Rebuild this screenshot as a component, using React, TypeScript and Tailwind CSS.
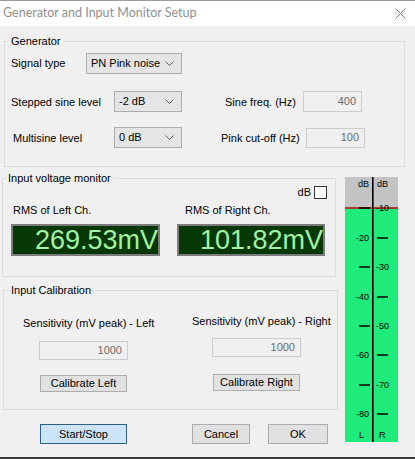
import React from 'react';

function Chevron() {
  return (
    <svg width="9" height="5" viewBox="0 0 9 5" className="shrink-0">
      <path d="M0.5 0.5 L4.5 4.5 L8.5 0.5" fill="none" stroke="#606060" strokeWidth="1" />
    </svg>
  );
}

function Combo({ value, width }: { value: string; width: string }) {
  return (
    <div className={`${width} flex h-[21px] items-center justify-between border border-[#adadad] bg-[#e5e5e5] pl-[4px] pr-[7px]`}>
      <span>{value}</span>
      <Chevron />
    </div>
  );
}

function Field({ value, className }: { value: string; className: string }) {
  return (
    <div className={`${className} flex items-center justify-end border border-[#cccccc] bg-[#f0f0f0] pr-[5px] text-[#6d6d6d]`}>
      {value}
    </div>
  );
}

function Btn({ label, className }: { label: string; className: string }) {
  return (
    <div className={`${className} flex items-center justify-center border border-[#adadad] bg-[#e1e1e1]`}>{label}</div>
  );
}

function Display({ value, className }: { value: string; className: string }) {
  return (
    <div
      className={`${className} flex h-[32px] items-center justify-end overflow-hidden border-2 border-[#7c7c7c] bg-[#053805] font-['Liberation_Sans',Arial,sans-serif] text-[27px] leading-none text-[#a2f2a2]`}
    >
      {value}
    </div>
  );
}

function Meter() {
  const left = ['-20', '-40', '-60', '-80'];
  const right = ['-10', '-30', '-50', '-70'];
  const ys = [31, 61, 90, 120, 149, 178, 208, 237];
  return (
    <svg width="53" height="265" viewBox="0 0 53 265" className="ml-[5px] mt-[10px] shrink-0" fontFamily="'Liberation Sans', Arial, sans-serif" fontSize="9">
      <rect x="0" y="0" width="53" height="31" fill="#c3c3c3" />
      <rect x="0" y="31" width="53" height="234" fill="#1feb7b" />
      <rect x="0" y="30" width="53" height="2" fill="#a53b2a" />
      <rect x="27" y="0" width="1.6" height="265" fill="#000" />
      <text x="24" y="10" textAnchor="end">dB</text>
      <text x="32" y="10">dB</text>
      {ys.map((y, i) => {
        const onRight = i % 2 === 0;
        const label = onRight ? right[i / 2] : left[(i - 1) / 2];
        return (
          <g key={y}>
            {onRight ? (
              <>
                <text x="31" y={y} dominantBaseline="central">{label}</text>
                <rect x="14" y={y - 0.75} width="11" height="1.5" fill="#000" />
              </>
            ) : (
              <>
                <text x="24" y={y} textAnchor="end" dominantBaseline="central">{label}</text>
                <rect x="32" y={y - 0.75} width="11" height="1.5" fill="#000" />
              </>
            )}
          </g>
        );
      })}
      <text x="14" y="258" dominantBaseline="central">L</text>
      <text x="34" y="258" dominantBaseline="central">R</text>
    </svg>
  );
}

export default function App() {
  return (
    <div className="flex h-[459px] w-[415px] flex-col border-b-2 border-[#3c3c3c] bg-[#f0f0f0] font-['Liberation_Sans',Arial,sans-serif] text-[11px] text-black">
      {/* title bar */}
      <div className="flex h-[26px] shrink-0 items-center justify-between border-t border-[#9b9b9b] bg-white pl-[3px] pr-[9px]">
        <span className="font-['Lato',sans-serif] text-[12.5px] text-[#8f8f8f]">Generator and Input Monitor Setup</span>
        <svg width="11" height="11" viewBox="0 0 11 11">
          <path d="M0.5 0.5 L10.5 10.5 M10.5 0.5 L0.5 10.5" stroke="#7a7a7a" strokeWidth="1" />
        </svg>
      </div>

      {/* Generator */}
      <fieldset className="ml-[4px] mt-[8px] h-[133px] w-[401px] border border-[#dcdcdc]">
        <legend className="ml-[4px] px-[2px] leading-[14px]">Generator</legend>
        <div className="mt-[5px] flex h-[21px] items-center">
          <span className="ml-[6px] w-[75px]">Signal type</span>
          <Combo value="PN Pink noise" width="w-[96px]" />
        </div>
        <div className="mt-[17px] flex h-[21px] items-center">
          <span className="ml-[6px] mt-[2px] w-[103px]">Stepped sine level</span>
          <Combo value="-2 dB" width="w-[68px]" />
          <span className="ml-[43px] mt-[2px] w-[78px]">Sine freq. (Hz)</span>
          <Field value="400" className="h-[21px] w-[59px]" />
        </div>
        <div className="mt-[15px] flex h-[21px] items-center">
          <span className="ml-[8px] mt-[2px] w-[101px]">Multisine level</span>
          <Combo value="0 dB" width="w-[68px]" />
          <span className="ml-[39px] mt-[2px] w-[85px]">Pink cut-off (Hz)</span>
          <Field value="100" className="h-[20px] w-[59px]" />
        </div>
      </fieldset>

      <div className="flex">
        <div className="flex w-[340px] flex-col">
          {/* Input voltage monitor */}
          <fieldset className="ml-[2px] mt-[4px] h-[106px] w-[334px] border border-[#dcdcdc]">
            <legend className="ml-[3px] px-[2px] leading-[14px]">Input voltage monitor</legend>
            <div className="mt-[1px] flex h-[13px] items-center justify-end pr-[8px]">
              <span className="mr-[3px]">dB</span>
              <div className="h-[13px] w-[13px] border border-[#333] bg-white" />
            </div>
            <div className="flex">
              <div className="ml-[8px] flex w-[149px] flex-col">
                <span className="ml-[2px] mt-[5px] leading-[13px]">RMS of Left Ch.</span>
                <Display value="269.53mV" className="mt-[7px] w-[149px]" />
              </div>
              <div className="ml-[17px] flex w-[148px] flex-col">
                <span className="ml-[8px] mt-[5px] leading-[13px]">RMS of Right Ch.</span>
                <Display value="101.82mV" className="mt-[7px] w-[148px]" />
              </div>
            </div>
          </fieldset>

          {/* Input Calibration */}
          <fieldset className="ml-[3px] mt-[6px] h-[127px] w-[335px] border border-[#dcdcdc]">
            <legend className="ml-[5px] px-[2px] leading-[14px]">Input Calibration</legend>
            <div className="flex">
              <div className="flex w-[170px] flex-col">
                <span className="ml-[19px] mt-[20px] leading-[13px]">Sensitivity (mV peak) - Left</span>
                <Field value="1000" className="ml-[35px] mt-[11px] h-[19px] w-[89px]" />
                <Btn label="Calibrate Left" className="ml-[36px] mt-[15px] h-[17px] w-[87px]" />
              </div>
              <div className="flex flex-col">
                <span className="ml-[18px] mt-[18px] leading-[13px]">Sensitivity (mV peak) - Right</span>
                <Field value="1000" className="ml-[38px] mt-[10px] h-[19px] w-[89px]" />
                <Btn label="Calibrate Right" className="ml-[39px] mt-[17px] h-[17px] w-[87px]" />
              </div>
            </div>
          </fieldset>

          {/* dialog buttons */}
          <div className="mt-[14px] flex">
            <div className="ml-[40px] flex h-[20px] w-[87px] items-center justify-center border border-[#2c5f8c] bg-[#cce4f7]">Start/Stop</div>
            <Btn label="Cancel" className="ml-[65px] h-[20px] w-[58px]" />
            <Btn label="OK" className="ml-[18px] h-[20px] w-[60px]" />
          </div>
        </div>
        <Meter />
      </div>
    </div>
  );
}
